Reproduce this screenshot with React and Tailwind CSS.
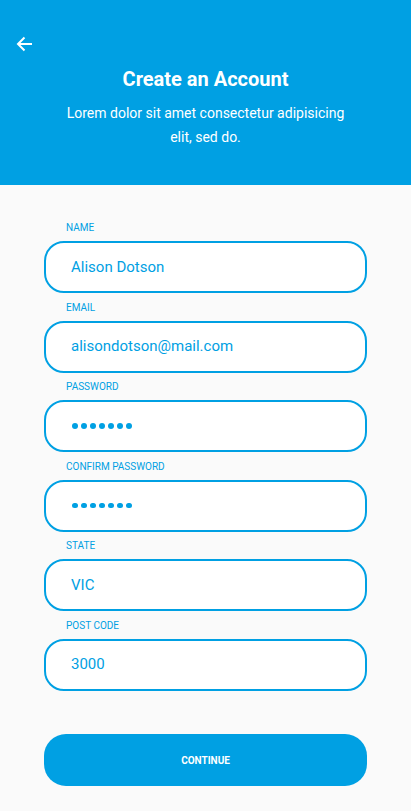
import React from "react";

const fields = [
  { label: "NAME", value: "Alison Dotson" },
  { label: "EMAIL", value: "alisondotson@mail.com" },
  { label: "PASSWORD", secret: true },
  { label: "CONFIRM PASSWORD", secret: true },
  { label: "STATE", value: "VIC" },
  { label: "POST CODE", value: "3000" },
];

function Dots() {
  return (
    <div className="flex items-center gap-[3.5px] pl-[1px]">
      {[0, 1, 2, 3, 4, 5, 6].map((i) => (
        <span key={i} className="block w-[5.5px] h-[5.5px] rounded-full bg-[#00a0e3]" />
      ))}
    </div>
  );
}

export default function App() {
  return (
    <div className="min-h-screen w-full bg-[#fafafa] font-['Roboto',sans-serif]">
      {/* Header */}
      <header className="h-[185px] bg-[#00a0e3] pt-[36px] px-[16px] text-white">
        <button className="block w-[18px] h-[16px]">
          <svg width="17" height="16" viewBox="0 0 17 16" fill="none" stroke="white" strokeWidth="2">
            <path d="M16 8H2" />
            <path d="M8.5 1.5L2 8l6.5 6.5" />
          </svg>
        </button>
        <h1 className="mt-[15px] text-center text-[20px] font-bold leading-[24px]">Create an Account</h1>
        <p className="mt-[10px] text-center text-[14px] leading-[24px] px-[50px]">
          Lorem dolor sit amet consectetur adipisicing elit, sed do.
        </p>
      </header>

      {/* Form */}
      <main className="px-[44px] pt-[36px] flex flex-col gap-[7.5px]">
        {fields.map((f) => (
          <div key={f.label} className="flex flex-col">
            <label className="pl-[22px] mb-[6px] text-[10px] leading-[14px] text-[#00a0e3]">{f.label}</label>
            <div className="h-[52px] rounded-[20px] border-2 border-[#00a0e3] bg-white flex items-center pl-[25px] text-[15px] text-[#00a0e3]">
              {f.secret ? <Dots /> : f.value}
            </div>
          </div>
        ))}

        <button className="mt-[36px] h-[52px] rounded-[22px] bg-[#00a0e3] text-white text-[10px] font-bold">
          CONTINUE
        </button>
      </main>
    </div>
  );
}
